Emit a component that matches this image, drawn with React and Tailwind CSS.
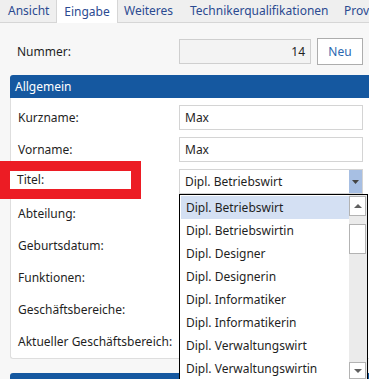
import React from "react";

const font = { fontFamily: '"Noto Sans", "Open Sans", sans-serif' };

function Row({ label, children }) {
  return (
    <div className="flex items-center h-[25px]">
      <div className="w-[161px] text-[12px] text-[#1f1f1f]">{label}</div>
      <div className="flex-1 h-full">{children}</div>
    </div>
  );
}

function Input({ value }) {
  return (
    <div className="h-full w-[184px] border border-[#d4d4d4] bg-white flex items-center pl-[5px] text-[12px] text-[#1f1f1f]">
      {value}
    </div>
  );
}

const items = [
  "Dipl. Betriebswirt",
  "Dipl. Betriebswirtin",
  "Dipl. Designer",
  "Dipl. Designerin",
  "Dipl. Informatiker",
  "Dipl. Informatikerin",
  "Dipl. Verwaltungswirt",
  "Dipl. Verwaltungswirtin",
];

export default function App() {
  return (
    <div className="relative w-[369px] h-[379px] overflow-hidden bg-[#f7f7f7]" style={font}>
      {/* Tabs */}
      <div className="flex h-[23px] bg-[#efefef] border-b border-[#d6d6d6] text-[12px] text-[#2b4a91] whitespace-nowrap">
        <div className="w-[56px] pl-[8px] flex items-center">Ansicht</div>
        <div className="w-[62px] h-[23px] bg-white border-x border-[#d6d6d6] flex items-center justify-center text-[#2b4a91]">Eingabe</div>
        <div className="w-[72px] pl-[6px] flex items-center">Weiteres</div>
        <div className="w-[154px] flex items-center">Technikerqualifikationen</div>
        <div className="flex items-center">Prov</div>
      </div>

      {/* Nummer */}
      <div className="flex items-center mt-[15px] pl-[17px]">
        <div className="w-[162px] text-[12px] text-[#1f1f1f]">Nummer:</div>
        <div className="w-[132px] h-[25px] bg-[#f3f3f3] border border-[#cfcfcf] flex items-center justify-end pr-[5px] text-[12px] text-[#1f1f1f]">14</div>
        <div className="ml-[6px] w-[46px] h-[27px] bg-white border border-[#adadad] flex items-center justify-center text-[12px] text-[#2b67b0]">Neu</div>
      </div>

      {/* Allgemein section */}
      <div className="ml-[10px] mt-[10px]">
        <div className="h-[23px] bg-[#1558a0] rounded-tl-[3px] text-white text-[12px] flex items-center pl-[5px]">Allgemein</div>
        <div className="h-[261px] bg-white border-l border-b border-[#dedede] rounded-bl-[3px] pl-[7px] pt-[7px] flex flex-col gap-[7px]">
          <Row label="Kurzname:"><Input value="Max" /></Row>
          <Row label="Vorname:"><Input value="Max" /></Row>
          <Row label="Titel:">
            <div className="h-full w-[184px] border border-[#d4d4d4] bg-white flex items-center text-[12px] text-[#1f1f1f]">
              <div className="flex-1 pl-[5px]">Dipl. Betriebswirt</div>
              <div className="w-[13px] h-full bg-[#a7bfe3] flex items-center justify-center">
                <svg width="7" height="4" viewBox="0 0 7 4"><path d="M0 0h7L3.5 4z" fill="#444" /></svg>
              </div>
            </div>
          </Row>
          <Row label="Abteilung:"><Input value="" /></Row>
          <Row label="Geburtsdatum:"><Input value="" /></Row>
          <Row label="Funktionen:"><Input value="" /></Row>
          <Row label="Geschäftsbereiche:"><Input value="" /></Row>
          <Row label="Aktueller Geschäftsbereich:"><Input value="" /></Row>
        </div>
        <div className="mt-[14px] h-[23px] bg-[#1558a0] rounded-tl-[3px]"></div>
      </div>

      {/* Red highlight */}
      <div className="absolute left-0 top-[161px] w-[141px] h-[38px] border-[10px] border-[#ec1c24] bg-white flex items-center pl-[7px] text-[12px] text-[#1f1f1f]">
        Titel:
      </div>

      {/* Dropdown list */}
      <div className="absolute left-[179px] top-[194px] w-[189px] h-[190px] border border-black bg-white flex">
        <div className="flex-1 pt-[1px] pl-[1px]">
          {items.map((t, i) => (
            <div
              key={t}
              className={
                "h-[23px] flex items-center pl-[5px] text-[12px] text-[#1f1f1f] " +
                (i === 0 ? "bg-[#d4e0f3]" : "")
              }
            >
              {t}
            </div>
          ))}
        </div>
        <div className="w-[18px] bg-[#ebebeb] flex flex-col">
          <div className="h-[20px] mt-[1px] mr-[1px] bg-white border border-[#b3b3b3] flex items-center justify-center">
            <svg width="8" height="4" viewBox="0 0 8 4"><path d="M4 0l4 4H0z" fill="#606060" /></svg>
          </div>
          <div className="mt-[8px] h-[30px] mr-[1px] bg-white border border-[#b3b3b3]"></div>
          <div className="flex-1"></div>
          <div className="h-[17px] mr-[1px] mb-[4px] bg-white border border-[#b3b3b3] flex items-center justify-center">
            <svg width="8" height="4" viewBox="0 0 8 4"><path d="M0 0h8L4 4z" fill="#606060" /></svg>
          </div>
        </div>
      </div>
    </div>
  );
}
